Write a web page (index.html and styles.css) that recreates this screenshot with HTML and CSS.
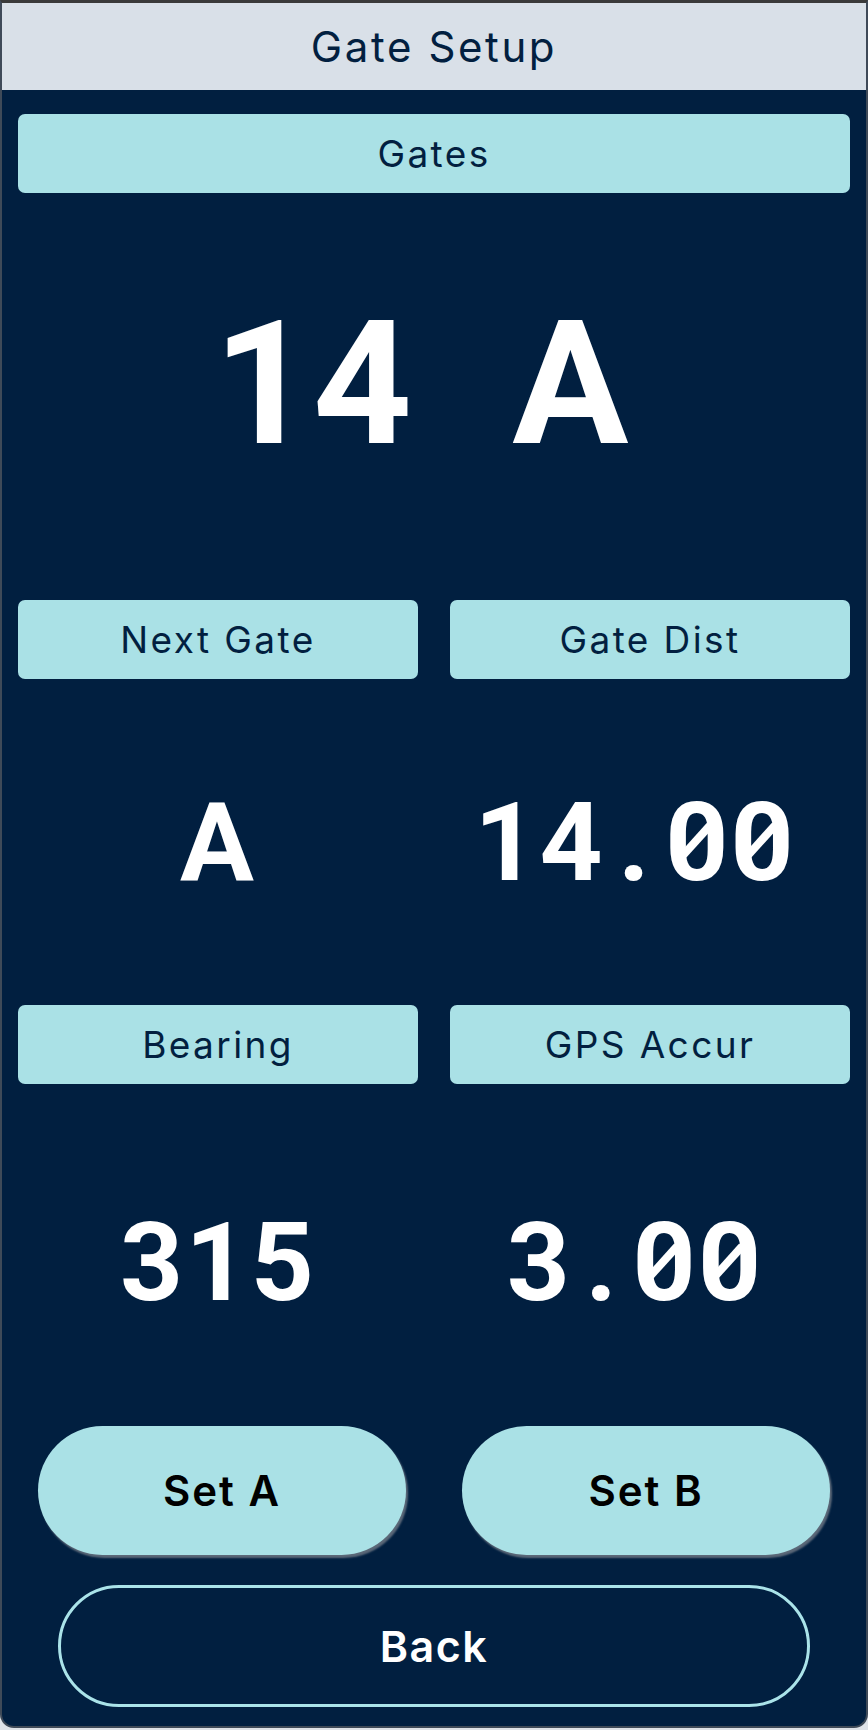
FILE: index.html
```html
<!DOCTYPE html>
<html lang="en">
<head>
    <meta charset="UTF-8">
    <meta name="viewport" content="width=device-width, initial-scale=1.0">
    <title>Gate Setup</title>

    <!-- CSS Styles -->
    <link rel="stylesheet" href="styles.css">
</head>
<body>

    <div class="frame">
        <!-- Title bar -->
        <div class="title-bar">Gate Setup</div>

        <!-- Readouts -->
        <div class="panel">
            <div class="label wide">Gates</div>
            <div class="value hero">14 A</div>

            <div class="label">Next Gate</div>
            <div class="label">Gate Dist</div>
            <div class="value row-two">A</div>
            <div class="value row-two right">14<span class="dot">.</span><span class="zero">0</span><span class="zero">0</span></div>

            <div class="label">Bearing</div>
            <div class="label">GPS Accur</div>
            <div class="value row-three">315</div>
            <div class="value row-three right">3<span class="dot">.</span><span class="zero">0</span><span class="zero">0</span></div>

            <!-- Buttons -->
            <div class="set-buttons">
                <button class="set-btn" onclick="setGate('A')">Set A</button>
                <button class="set-btn" onclick="setGate('B')">Set B</button>
            </div>
            <button class="back-btn" onclick="history.back()">Back</button>
        </div>
    </div>

    <script>
        function setGate(mark) {
            console.log("Gate " + mark + " set");
        }
    </script>

</body>
</html>
```

FILE: styles.css
```css
/* Page and frame */
body {
    margin: 0;
    background-color: #dfe3e8;
    font-family: Inter, "Open Sans", sans-serif;
}

.frame {
    width: 864px;
    background-color: #011f40;
    border: 2px solid #3f4a58;
    border-top: 3px solid #3a3a3a;
    border-radius: 0 0 14px 14px;
    overflow: hidden;
}

.title-bar {
    height: 87px;
    display: flex;
    align-items: center;
    justify-content: center;
    background-color: #d9e0e8;
    color: #021f40;
    font-size: 42px;
    letter-spacing: 2.6px;
}

.panel {
    display: grid;
    grid-template-columns: 1fr 1fr;
    column-gap: 32px;
    padding: 24px 16px 19px;
}

/* Cyan caption boxes */
.label {
    height: 79px;
    display: flex;
    align-items: center;
    justify-content: center;
    background-color: #aae1e6;
    color: #021f40;
    border-radius: 7px;
    font-size: 37px;
    letter-spacing: 2.4px;
}

.label.wide {
    grid-column: span 2;
}

/* Big white numbers, spaced like a mono face */
.value {
    display: flex;
    align-items: center;
    justify-content: center;
    color: white;
    font-family: Roboto, "DejaVu Sans Mono", monospace;
    font-weight: bold;
    font-size: 110px;
    letter-spacing: 0.02em;
    box-sizing: border-box;
}

.value .dot {
    padding: 0 0.12em;
}

.value .zero {
    position: relative;
    display: inline-block;
}

.value .zero::after {
    content: "";
    position: absolute;
    left: calc(50% - 0.01em);
    top: 0.57em;
    width: 0.075em;
    height: 0.36em;
    background-color: currentColor;
    transform: translate(-50%, -50%) rotate(42deg);
}

.value.hero {
    grid-column: span 2;
    height: 407px;
    padding: 0 26px 26px 0;
    font-size: 173px;
    letter-spacing: 0;
    word-spacing: 0.33em;
}

.value.row-two {
    height: 326px;
    padding-bottom: 0;
}

.value.row-three {
    height: 342px;
    padding-top: 15px;
}

.value.right {
    padding-right: 30px;
}

/* Buttons */
.set-buttons {
    grid-column: span 2;
    display: grid;
    grid-template-columns: 1fr 1fr;
    gap: 56px;
    padding: 0 20px;
}

.set-btn {
    height: 129px;
    border: none;
    border-radius: 65px;
    background-color: #aae1e6;
    color: black;
    font-family: Inter, "Open Sans", sans-serif;
    font-weight: 600;
    font-size: 42px;
    letter-spacing: 2px;
    box-shadow: 2px 3px 2px #5b6878;
    cursor: pointer;
}

.back-btn {
    grid-column: span 2;
    height: 122px;
    margin: 30px 40px 0;
    border: 3px solid #aae3e9;
    border-radius: 61px;
    background-color: transparent;
    color: white;
    font-family: Inter, "Open Sans", sans-serif;
    font-weight: 600;
    font-size: 43px;
    letter-spacing: 1.5px;
    cursor: pointer;
}
```
